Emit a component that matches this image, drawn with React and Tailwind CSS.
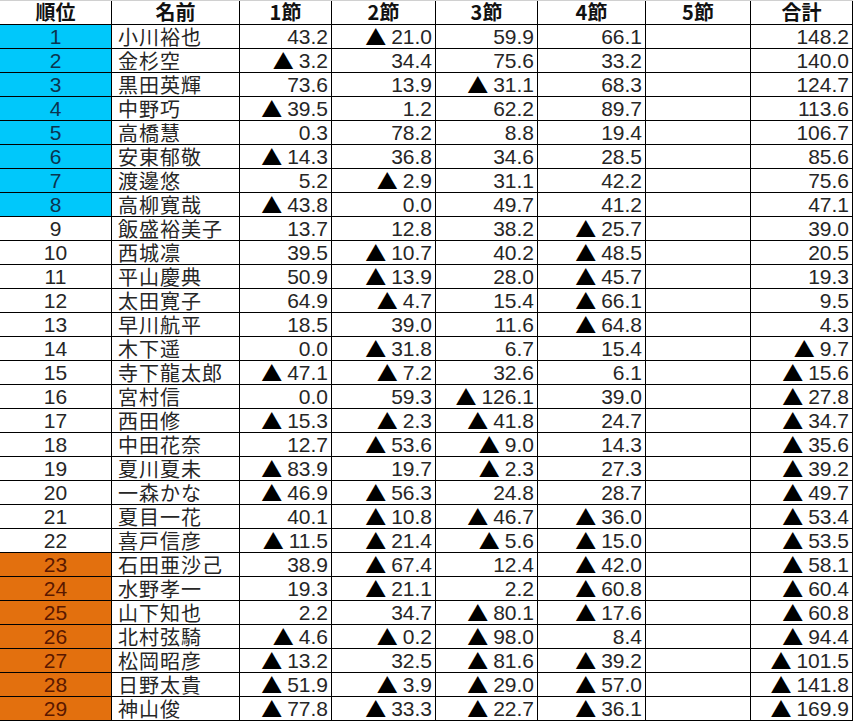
import React from "react";

const rows = [
  ["小川裕也", "43.2", "▲21.0", "59.9", "66.1", "", "148.2"],
  ["金杉空", "▲3.2", "34.4", "75.6", "33.2", "", "140.0"],
  ["黒田英輝", "73.6", "13.9", "▲31.1", "68.3", "", "124.7"],
  ["中野巧", "▲39.5", "1.2", "62.2", "89.7", "", "113.6"],
  ["高橋慧", "0.3", "78.2", "8.8", "19.4", "", "106.7"],
  ["安東郁敬", "▲14.3", "36.8", "34.6", "28.5", "", "85.6"],
  ["渡邊悠", "5.2", "▲2.9", "31.1", "42.2", "", "75.6"],
  ["高柳寛哉", "▲43.8", "0.0", "49.7", "41.2", "", "47.1"],
  ["飯盛裕美子", "13.7", "12.8", "38.2", "▲25.7", "", "39.0"],
  ["西城凛", "39.5", "▲10.7", "40.2", "▲48.5", "", "20.5"],
  ["平山慶典", "50.9", "▲13.9", "28.0", "▲45.7", "", "19.3"],
  ["太田寛子", "64.9", "▲4.7", "15.4", "▲66.1", "", "9.5"],
  ["早川航平", "18.5", "39.0", "11.6", "▲64.8", "", "4.3"],
  ["木下遥", "0.0", "▲31.8", "6.7", "15.4", "", "▲9.7"],
  ["寺下龍太郎", "▲47.1", "▲7.2", "32.6", "6.1", "", "▲15.6"],
  ["宮村信", "0.0", "59.3", "▲126.1", "39.0", "", "▲27.8"],
  ["西田修", "▲15.3", "▲2.3", "▲41.8", "24.7", "", "▲34.7"],
  ["中田花奈", "12.7", "▲53.6", "▲9.0", "14.3", "", "▲35.6"],
  ["夏川夏未", "▲83.9", "19.7", "▲2.3", "27.3", "", "▲39.2"],
  ["一森かな", "▲46.9", "▲56.3", "24.8", "28.7", "", "▲49.7"],
  ["夏目一花", "40.1", "▲10.8", "▲46.7", "▲36.0", "", "▲53.4"],
  ["喜戸信彦", "▲11.5", "▲21.4", "▲5.6", "▲15.0", "", "▲53.5"],
  ["石田亜沙己", "38.9", "▲67.4", "12.4", "▲42.0", "", "▲58.1"],
  ["水野孝一", "19.3", "▲21.1", "2.2", "▲60.8", "", "▲60.4"],
  ["山下知也", "2.2", "34.7", "▲80.1", "▲17.6", "", "▲60.8"],
  ["北村弦騎", "▲4.6", "▲0.2", "▲98.0", "8.4", "", "▲94.4"],
  ["松岡昭彦", "▲13.2", "32.5", "▲81.6", "▲39.2", "", "▲101.5"],
  ["日野太貴", "▲51.9", "▲3.9", "▲29.0", "▲57.0", "", "▲141.8"],
  ["神山俊", "▲77.8", "▲33.3", "▲22.7", "▲36.1", "", "▲169.9"],
];

const numWidths = ["w-[92px]", "w-[104px]", "w-[102px]", "w-[108px]", "w-[105px]", "w-[102px]"];

function Num({ v }) {
  if (!v) return null;
  if (v.startsWith("▲")) {
    return (
      <span className="flex items-center">
        <span className="font-['Noto_Sans_CJK_JP',sans-serif] text-[21px] leading-none mr-[5px] text-black">▲</span>
        <span>{v.slice(1)}</span>
      </span>
    );
  }
  return <span>{v}</span>;
}

export default function App() {
  const headers = ["1節", "2節", "3節", "4節", "5節", "合計"];
  return (
    <div className="w-[853px] h-[721px] bg-white text-[#262626] font-['Liberation_Sans','Noto_Sans_CJK_JP',sans-serif] overflow-hidden">
      <div className="h-px bg-[#d0d0d0]" />
      <div className="flex h-[24px] border-b border-black font-bold text-[20px] leading-[23px] text-[#111]">
        <div className="w-[112px] border-r border-black text-center font-['Noto_Sans_CJK_JP',sans-serif] leading-[22px]">順位</div>
        <div className="w-[128px] border-r border-black text-center font-['Noto_Sans_CJK_JP',sans-serif] leading-[22px]">名前</div>
        {headers.map((h, i) => (
          <div key={h} className={`${numWidths[i]} border-r border-black text-center font-['Noto_Sans_CJK_JP',sans-serif] leading-[22px]`}>
            {h}
          </div>
        ))}
      </div>
      {rows.map((r, idx) => {
        const rank = idx + 1;
        const bg = rank <= 8 ? "bg-[#00c8fb]" : rank >= 23 ? "bg-[#e3700e]" : "bg-white";
        const rankColor = rank <= 8 ? "text-[#0b3550]" : rank >= 23 ? "text-[#5a1800]" : "text-[#262626]";
        return (
          <div key={rank} className="flex h-[24px] border-b border-black text-[21px] leading-[23px]">
            <div className={`w-[112px] border-r border-black text-center ${bg} ${rankColor}`}>{rank}</div>
            <div className="w-[128px] border-r border-black pl-[6px] font-['Noto_Sans_CJK_JP',sans-serif] text-[20px] leading-[23px] tracking-[1px] whitespace-nowrap overflow-hidden">
              {r[0]}
            </div>
            {r.slice(1).map((v, i) => (
              <div key={i} className={`${numWidths[i]} border-r border-black flex justify-end pr-[3px]`}>
                <Num v={v} />
              </div>
            ))}
          </div>
        );
      })}
    </div>
  );
}
